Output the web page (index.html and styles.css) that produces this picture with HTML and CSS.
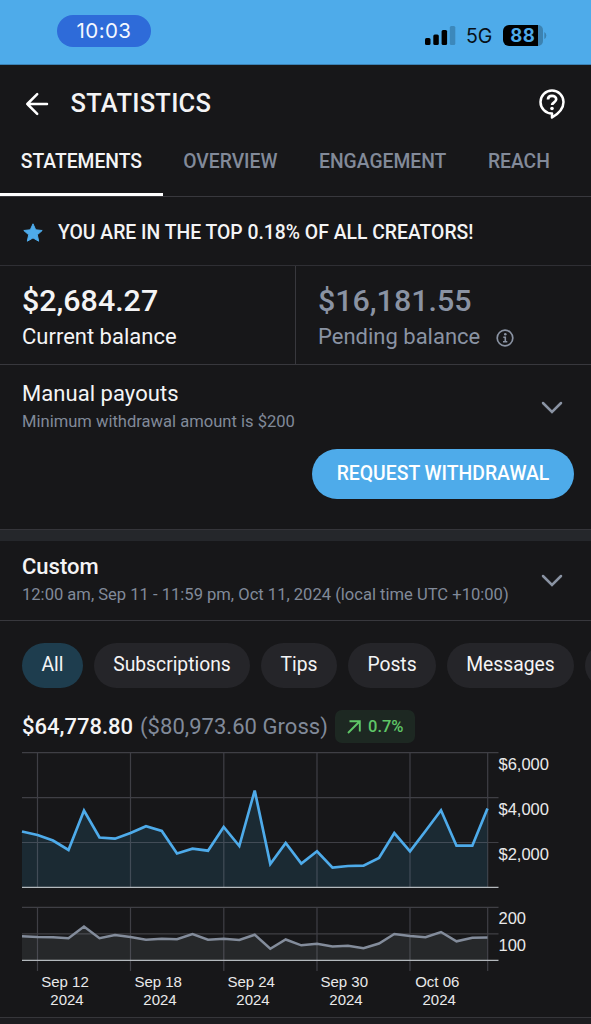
FILE: index.html
```html
<!DOCTYPE html>
<html lang="en">
<head>
<meta charset="utf-8">
<title>Statistics</title>
<link rel="stylesheet" href="styles.css">
</head>
<body>
<div class="status">
  <span class="clock">10:03</span>
  <div class="indicators">
    <svg class="signal" width="31" height="20" viewBox="0 0 31 20"><rect x="0" y="12" width="5.5" height="7" rx="1.5"/><rect x="8.3" y="8.5" width="5.5" height="10.5" rx="1.5"/><rect x="16.6" y="4" width="5.5" height="15" rx="1.5"/><rect x="24.8" y="0" width="5.5" height="19" rx="1.5" fill="#3c88bb"/></svg>
    <span class="network">5G</span>
    <svg class="battery" width="44" height="21" viewBox="0 0 44 21"><path d="M34 0h1a5 5 0 0 1 5 5v11a5 5 0 0 1-5 5h-1z" fill="#3c82b1"/><path d="M6 0h29v21H6a6 6 0 0 1-6-6V6a6 6 0 0 1 6-6z"/><path d="M41.3 7q2 1.2 2 3.5t-2 3.5z" fill="#3c82b1"/><text x="19.8" y="17.2" text-anchor="middle" class="charge">88</text></svg>
  </div>
</div>
<header class="header">
  <svg class="back" width="24" height="24" viewBox="0 0 24 24"><path d="M22 12H2.300M12.200 2.200L2.300 12l9.900 9.800" fill="none" stroke="#fff" stroke-width="2.500" stroke-linecap="round" stroke-linejoin="round"/></svg>
  <h1 class="title">STATISTICS</h1>
  <svg class="help" width="26" height="31" viewBox="0 0 26 31"><path d="M13 24.500A11.500 11.500 0 1 1 24.500 13c0 7-5.500 12-11.500 15.500z" fill="none" stroke="#fff" stroke-width="2.500" stroke-linejoin="round"/><path d="M9 10.400c0-2.300 1.700-3.500 4-3.500s4.200 1.300 4.200 3.400c0 3-4.100 3-4.100 5.700" fill="none" stroke="#fff" stroke-width="2.700"/><circle cx="13" cy="19.500" r="1.800" fill="#fff"/></svg>
</header>
<nav class="tabs">
  <a class="tab active">STATEMENTS</a>
  <a class="tab">OVERVIEW</a>
  <a class="tab">ENGAGEMENT</a>
  <a class="tab">REACH</a>
</nav>
<div class="rank">
  <svg width="20" height="19" viewBox="0 0 20 19"><path d="M10 .8l2.700 6 6.500.7-4.900 4.300 1.400 6.400-5.700-3.300-5.700 3.300 1.400-6.400L.8 7.500l6.500-.7z" fill="#4eabea" stroke="#4eabea" stroke-linejoin="round"/></svg>
  <span class="rank-text">YOU ARE IN THE TOP 0.18% OF ALL CREATORS!</span>
</div>
<section class="balances">
  <div class="balance">
    <div class="amount">$2,684.27</div>
    <div class="label current">Current balance</div>
  </div>
  <div class="balance pending">
    <div class="amount">$16,181.55</div>
    <div class="label">Pending balance <svg class="info" width="18" height="18" viewBox="0 0 18 18"><circle cx="9" cy="9" r="7.800" fill="none" stroke="#8a93a3" stroke-width="1.700"/><circle cx="9.300" cy="5.300" r="1.300" fill="#8a93a3"/><path d="M7.300 8.300h2v4.500M7 12.800h4.300" fill="none" stroke="#8a93a3" stroke-width="1.600"/></svg></div>
  </div>
</section>
<section class="payouts">
  <div class="row">
    <div>
      <div class="row-title manual">Manual payouts</div>
      <div class="row-note min">Minimum withdrawal amount is $200</div>
    </div>
    <svg class="chevron" width="22" height="14" viewBox="0 0 22 14"><path d="M2 2l9 9 9-9" fill="none" stroke="#8a93a3" stroke-width="2.500" stroke-linecap="round"/></svg>
  </div>
  <button class="withdraw">REQUEST WITHDRAWAL</button>
</section>
<div class="divider"></div>
<section class="row period">
  <div>
    <div class="row-title custom">Custom</div>
    <div class="row-note range">12:00 am, Sep 11 - 11:59 pm, Oct 11, 2024 (local time UTC +10:00)</div>
  </div>
  <svg class="chevron" width="22" height="14" viewBox="0 0 22 14"><path d="M2 2l9 9 9-9" fill="none" stroke="#8a93a3" stroke-width="2.500" stroke-linecap="round"/></svg>
</section>
<div class="chips">
  <span class="chip selected">All</span>
  <span class="chip subs">Subscriptions</span>
  <span class="chip tips">Tips</span>
  <span class="chip posts">Posts</span>
  <span class="chip messages">Messages</span>
  <span class="chip more"></span>
</div>
<div class="totals">
  <strong class="net">$64,778.80</strong>
  <span class="gross">($80,973.60 Gross)</span>
  <span class="growth"><svg width="14" height="14" viewBox="0 0 14 14"><path d="M1 13L12.500 1.500M2.500 1.200h10.300v10.300" fill="none" stroke="#5fc667" stroke-width="1.900"/></svg><span>0.7%</span></span>
</div>
<svg class="chart" width="591" height="270" viewBox="0 747 591 270">
  <path class="area" d="M22 887V831.500L37.500 835 53 840.500 68.500 850 84 810.500 99.500 837.500 115 838.700 130.500 833 146 826.300 161.800 831 177 853.500 192.500 848.700 208 850.700 223.700 827 239.300 846 254.700 790.500 270.300 864 285.700 843 301.300 863.500 317 851.300 332.500 867.700 348 866 363.500 865.700 379 858 394.300 833 410 851.300 425.500 831 441 810.300 456.500 845.700 472.300 845.700 487.500 808.500V887z"/>
  <path class="area-count" d="M22 960V936.300L37.500 937 53 937.300 68.500 938.300 84 926.500 99.500 938.200 115 935 130.500 937 146 939.700 161.800 938.800 177 939.200 192.500 934 208 939.700 223.700 938.700 239.300 940 254.700 934.700 270.300 948.800 285.700 939.500 301.300 945.300 317 943.700 332.500 946.500 348 945.700 363.500 948.300 379 943.500 394.300 934 410 936 425.500 937.300 441 932 456.500 941.300 472.300 937.800 487.500 937.600V960z"/>
  <path class="grid" d="M22 752.700h476.500M22 797.700h476.500M22 842.500h476.500M22 907.300h476.500M22 933.900h476.500M37.500 752v135M130.500 752v135M223.800 752v135M317 752v135M410 752v135M487.700 752v135M37.500 907v64M130.500 907v64M223.800 907v64M317 907v64M410 907v64M487.700 907v64"/>
  <path class="axis" d="M22 887.400h476.500M22 960.400h476.500"/>
  <polyline class="line" points="22,831.500 37.500,835 53,840.500 68.500,850 84,810.500 99.500,837.500 115,838.700 130.500,833 146,826.300 161.800,831 177,853.500 192.500,848.700 208,850.700 223.700,827 239.300,846 254.700,790.500 270.300,864 285.700,843 301.300,863.500 317,851.300 332.500,867.700 348,866 363.500,865.700 379,858 394.300,833 410,851.300 425.500,831 441,810.300 456.500,845.700 472.300,845.700 487.500,808.500"/>
  <polyline class="line count" points="22,936.300 37.500,937 53,937.300 68.500,938.300 84,926.500 99.500,938.200 115,935 130.500,937 146,939.700 161.800,938.800 177,939.200 192.500,934 208,939.700 223.700,938.700 239.300,940 254.700,934.700 270.300,948.800 285.700,939.500 301.300,945.300 317,943.700 332.500,946.500 348,945.700 363.500,948.300 379,943.500 394.300,934 410,936 425.500,937.300 441,932 456.500,941.300 472.300,937.800 487.500,937.600"/>
  <g class="y-labels"><text x="498.500" y="769.700">$6,000</text><text x="498.500" y="814.700">$4,000</text><text x="498.500" y="859.500">$2,000</text><text x="498.500" y="924.300">200</text><text x="498.500" y="951">100</text></g>
  <g class="x-labels"><text x="65" y="986.500">Sep 12</text><text x="67" y="1004.700">2024</text><text x="158.200" y="986.500">Sep 18</text><text x="160" y="1004.700">2024</text><text x="251.200" y="986.500">Sep 24</text><text x="253" y="1004.700">2024</text><text x="344.300" y="986.500">Sep 30</text><text x="346" y="1004.700">2024</text><text x="437.300" y="986.500">Oct 06</text><text x="439.200" y="1004.700">2024</text></g>
</svg>
<div class="end"></div>
</body>
</html>
```
FILE: styles.css
```css
* { box-sizing: border-box; }
body { margin: 0; width: 591px; height: 1024px; overflow: hidden; background: #171719; color: #f4f4f5; font-family: Roboto, "Liberation Sans", sans-serif; }
svg { flex: none; }
.status { height: 65px; background: #4eabea; display: flex; justify-content: space-between; align-items: flex-start; padding: 15px 44px 0 57px; border-bottom: 1px solid #3b82b5; }
.clock { width: 94px; height: 32px; border-radius: 16px; background: #2e6bd9; color: #f4f8ff; text-align: center; font: 20.500px/32px Inter, sans-serif; letter-spacing: .4px; }
.indicators { display: flex; align-items: center; padding-top: 9px; }
.signal { margin: 1px 10px 0 0; }
.network { font: 19.500px/22px Inter, sans-serif; color: #071018; width: 37px; padding-top: 1px; }
.battery { margin-top: -1px; }
.charge { font: 700 18.500px Inter, sans-serif; fill: #4eabea; letter-spacing: .4px; }
.header { height: 77px; display: flex; align-items: center; padding: 0 26px 0 25px; }
.title { margin: 0 auto 2px 21.500px; font-size: 25.500px; line-height: 30px; font-weight: 500; letter-spacing: .25px; }
.help { margin-top: 2px; }
.tabs { height: 55px; display: flex; border-bottom: 1px solid #38383d; font-size: 19.300px; line-height: 40px; font-weight: 500; color: #828a99; }
.tab { padding: 0 20.800px; white-space: nowrap; height: 54px; }
.active { color: #f4f4f5; width: 162.500px; border-bottom: 3px solid #fff; }
.rank { height: 69px; display: flex; align-items: center; gap: 15px; padding: 2px 23px 0 23px; border-bottom: 1px solid #2f2f34; font-size: 19.350px; font-weight: 500; white-space: nowrap; }
.balances { height: 99px; display: grid; grid-template-columns: 295px 1fr; border-bottom: 1px solid #38383d; }
.balance { padding: 16px 0 0 22px; }
.pending { border-left: 1px solid #38383d; color: #8a93a3; }
.amount { font-size: 30.400px; line-height: 38px; font-weight: 500; }
.label { font-size: 22px; line-height: 33px; display: flex; align-items: center; }
.info { margin: 3px 0 0 16px; }
.payouts { height: 164px; padding-top: 15px; display: flex; flex-direction: column; }
.row { display: flex; justify-content: space-between; align-items: center; padding: 0 28px 0 22px; }
.row-title { font-size: 22px; line-height: 28px; }
.row-note { font-size: 16.570px; line-height: 28px; color: #818a99; white-space: nowrap; }
.manual { letter-spacing: .05px; }
.custom { font-weight: 500; }
.withdraw { align-self: flex-end; margin: 13px 17px 0 0; width: 262px; height: 50px; border: 0; border-radius: 25px; background: #4eabea; color: #fff; font: 500 19.350px/47px Roboto, sans-serif; padding: 0 0 2px; white-space: nowrap; }
.divider { height: 12px; background: #25272b; border-top: 1px solid #35353a; }
.period { height: 80px; padding-top: 1px; border-bottom: 1px solid #38383d; }
.chips { display: flex; gap: 11px; padding: 22px 0 0 22px; height: 67px; overflow: hidden; }
.chip { flex: none; height: 45px; border-radius: 22.500px; background: #252529; text-align: center; font-size: 19.300px; line-height: 43px; }
.selected { width: 61px; background: #1e3d4e; }
.subs { width: 156px; }
.tips { width: 76px; }
.posts { width: 88px; }
.messages { width: 127px; }
.more { width: 100px; }
.totals { display: flex; align-items: center; padding: 17px 22px 0; height: 60px; font-size: 22px; line-height: 30px; white-space: nowrap; }
.net { font-weight: 500; width: 118px; }
.gross { color: #818a99; width: 195px; letter-spacing: .04px; }
.growth { width: 80px; height: 33px; border-radius: 7px; background: #1d2822; color: #5fc667; display: flex; align-items: center; gap: 7px; padding-left: 12px; font-size: 16.500px; font-weight: 500; }
.chart { display: block; height: 270px; margin-top: -1px; }
.area { fill: #1b2a33; }
.area-count { fill: #26282a; }
.grid { fill: none; stroke: #9292a0; stroke-opacity: .33; stroke-width: 1.200; }
.axis { fill: none; stroke: #b4b9bd; stroke-width: 1.300; }
.line { fill: none; stroke: #4eabea; stroke-width: 2.700; }
.count { stroke: #838c9b; stroke-width: 2.500; }
.y-labels, .x-labels { font-family: "Liberation Sans", sans-serif; fill: #e9e9ea; }
.y-labels { font-size: 16.500px; }
.x-labels { font-size: 15px; text-anchor: middle; }
.end { height: 10px; border-top: 1px solid #36363a; background: #1c1c1f; }
```
